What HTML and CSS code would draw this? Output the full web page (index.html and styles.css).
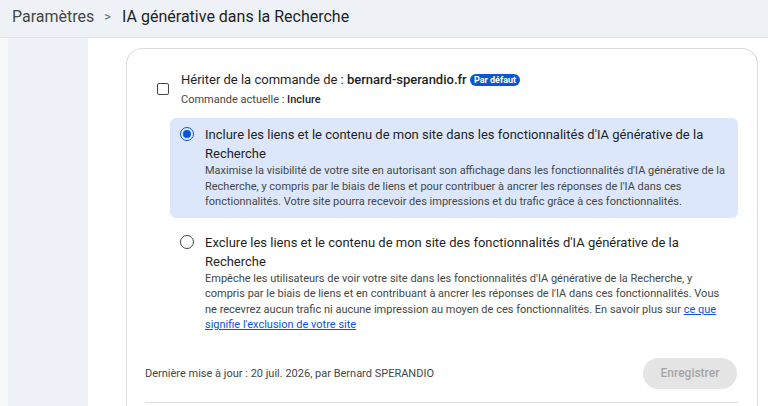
FILE: index.html
```html
<!DOCTYPE html>
<html lang="fr">
<head>
<meta charset="UTF-8">
<title>IA générative dans la Recherche</title>
<link rel="stylesheet" href="styles.css">
</head>
<body>
    <!-- Breadcrumb bar -->
    <div class="topbar">
        <span class="crumb">Paramètres</span>
        <span class="sep">&gt;</span>
        <span class="crumb current">IA générative dans la Recherche</span>
    </div>

    <div class="layout">
        <div class="sidebar"></div>

        <div class="main">
            <div class="card">
                <div class="inherit">
                    <span class="checkbox"></span>
                    <div>
                        <div class="inherit-title">Hériter de la commande de : <b>bernard-sperandio.fr</b> <span class="badge">Par défaut</span></div>
                        <div class="inherit-sub">Commande actuelle : <b>Inclure</b></div>
                    </div>
                </div>

                <div class="option selected">
                    <span class="radio on"></span>
                    <div>
                        <div class="option-title">Inclure les liens et le contenu de mon site dans les fonctionnalités d'IA générative de la Recherche</div>
                        <div class="option-desc">Maximise la visibilité de votre site en autorisant son affichage dans les fonctionnalités d'IA générative de la Recherche, y compris par le biais de liens et pour contribuer à ancrer les réponses de l'IA dans ces fonctionnalités. Votre site pourra recevoir des impressions et du trafic grâce à ces fonctionnalités.</div>
                    </div>
                </div>

                <div class="option">
                    <span class="radio"></span>
                    <div>
                        <div class="option-title">Exclure les liens et le contenu de mon site des fonctionnalités d'IA générative de la Recherche</div>
                        <div class="option-desc">Empêche les utilisateurs de voir votre site dans les fonctionnalités d'IA générative de la Recherche, y compris par le biais de liens et en contribuant à ancrer les réponses de l'IA dans ces fonctionnalités. Vous ne recevrez aucun trafic ni aucune impression au moyen de ces fonctionnalités. En savoir plus sur <a href="#">ce que signifie l'exclusion de votre site</a></div>
                    </div>
                </div>

                <div class="footer">
                    <span class="updated">Dernière mise à jour : 20 juil. 2026, par Bernard SPERANDIO</span>
                    <button class="save" disabled>Enregistrer</button>
                </div>
                <hr class="divider">
            </div>
        </div>
    </div>
</body>
</html>
```

FILE: styles.css
```css
/* Page */
body, html {
    margin: 0;
    height: 100%;
    font-family: Roboto, "Noto Sans", sans-serif;
    color: #1f1f1f;
    background: #f6f8fb;
    overflow: hidden;
}

/* Breadcrumb bar */
.topbar {
    height: 38px;
    box-sizing: border-box;
    display: flex;
    align-items: center;
    padding: 0 0 4px 12px;
    background: #eef2f7;
    border-bottom: 1px solid #dfe4ea;
    font-size: 16px;
    color: #444746;
}

.topbar .sep {
    font-size: 13px;
    color: #5f6368;
    margin: 0 11px 0 10px;
}

.topbar .current {
    color: #1f1f1f;
}

/* Layout */
.layout {
    display: flex;
    height: calc(100% - 38px);
}

.sidebar {
    width: 80px;
    margin-left: 8px;
    background: #eef2f8;
}

.main {
    flex: 1;
    padding: 10px 10px 0 38px;
    background: #fff;
}

/* Card */
.card {
    border: 1px solid #dadce0;
    border-bottom: none;
    border-radius: 16px 16px 0 0;
    padding: 21px 19px 0 18px;
    height: 100%;
    box-sizing: border-box;
}

/* Inherit row */
.inherit {
    display: flex;
    align-items: center;
    gap: 12px;
    padding-left: 12px;
}

.checkbox {
    width: 10px;
    height: 10px;
    border: 1.5px solid #444746;
    border-radius: 2px;
    flex-shrink: 0;
}

.inherit-title {
    font-size: 13px;
    line-height: 20px;
}

.inherit-title b {
    font-weight: 500;
}

.badge {
    display: inline-block;
    background: #0b57d0;
    color: #fff;
    font-size: 9px;
    font-weight: 700;
    line-height: 12px;
    padding: 0 4px;
    border-radius: 7px;
    vertical-align: 1px;
}

.inherit-sub {
    font-size: 11px;
    line-height: 16px;
    margin-top: 2px;
    color: #444746;
}

.inherit-sub b {
    font-weight: 500;
    color: #1f1f1f;
}

/* Radio options */
.option {
    display: flex;
    gap: 11px;
    padding: 7px 10px 8px 10px;
    margin: 8px 0 0 25px;
    border-radius: 6px;
}

.option.selected {
    background: #dce7fb;
    margin-top: 10px;
}

.radio {
    width: 12px;
    height: 12px;
    border: 1.5px solid #444746;
    border-radius: 50%;
    flex-shrink: 0;
    margin-top: 2px;
    position: relative;
}

.radio.on {
    border-color: #0b57d0;
}

.radio.on::after {
    content: "";
    position: absolute;
    left: 2px;
    top: 2px;
    width: 8px;
    height: 8px;
    border-radius: 50%;
    background: #0b57d0;
}

.option-title {
    font-size: 13px;
    line-height: 19px;
    color: #1f1f1f;
}

.option-desc {
    font-size: 11px;
    line-height: 15.5px;
    color: #444746;
}

.option-desc a {
    color: #0b57d0;
}

/* Footer */
.footer {
    display: flex;
    align-items: center;
    justify-content: space-between;
    margin-top: 17px;
    padding-right: 1px;
}

.updated {
    font-size: 11px;
    color: #444746;
}

.save {
    font-family: inherit;
    font-size: 12px;
    font-weight: 500;
    color: #a6a6a6;
    background: #e5e5e5;
    border: none;
    border-radius: 16px;
    width: 94px;
    height: 31px;
}

.divider {
    border: none;
    border-top: 1px solid #dadce0;
    margin: 13px 0 0 0;
}
```
